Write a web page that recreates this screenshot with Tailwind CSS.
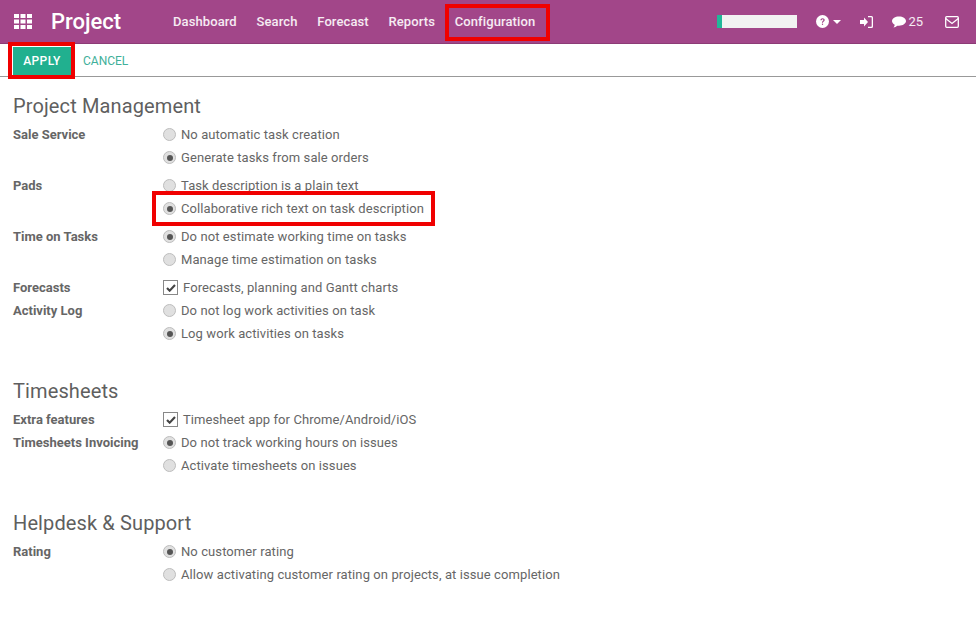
<!DOCTYPE html>
<html>
<head>
<meta charset="utf-8">
<script src="https://cdn.jsdelivr.net/npm/@tailwindcss/browser@4"></script>
</head>
<body class="bg-white">
<div class="relative w-[976px] h-[627px] overflow-hidden font-['Roboto',sans-serif] text-[13px] text-[#666666]">
  <header class="h-[44px] bg-[#a24689] border-b border-[#8c3b76] flex items-center text-white">
    <svg class="ml-[14px] w-[18px] h-[15px]" viewBox="0 0 18 15" fill="#fff">
      <rect x="0" y="0" width="5" height="4"/><rect x="6.5" y="0" width="5" height="4"/><rect x="13" y="0" width="5" height="4"/>
      <rect x="0" y="5.5" width="5" height="4"/><rect x="6.5" y="5.5" width="5" height="4"/><rect x="13" y="5.5" width="5" height="4"/>
      <rect x="0" y="11" width="5" height="4"/><rect x="6.5" y="11" width="5" height="4"/><rect x="13" y="11" width="5" height="4"/>
    </svg>
    <div class="ml-[19px] w-[70px] text-[22px] font-medium leading-none">Project</div>
    <nav class="ml-[52px] flex text-[13px] font-medium text-white/90 gap-[19.75px] tracking-[0.1px]">
      <span>Dashboard</span><span>Search</span><span>Forecast</span><span>Reports</span><span>Configuration</span>
    </nav>
    <div class="ml-auto flex items-center">
      <div class="w-[80px] h-[13px] bg-[#f2f2f2] border-l-[5px] border-[#21b799]"></div>
      <svg class="ml-[19px] w-[13px] h-[13px]" viewBox="0 0 13 13"><circle cx="6.5" cy="6.5" r="6.5" fill="#fff"/><path d="M4.4 5.2c0-1.3 1-2 2.2-2s2.1.7 2.1 1.8c0 1.500-1.700 1.500-1.700 2.700H5.900c0-1.800 1.500-1.800 1.500-2.700 0-.4-.3-.7-.8-.7s-.8.4-.9 1z" fill="#a24689"/><rect x="5.900" y="8.600" width="1.200" height="1.300" fill="#a24689"/></svg>
      <div class="ml-[4px] w-0 h-0 border-x-[4px] border-x-transparent border-t-[4px] border-t-white"></div>
      <svg class="ml-[19px] w-[13px] h-[12px]" viewBox="0 0 13 12" fill="#fff"><path d="M0 4h4V1.500L8 6l-4 4.500V8H0z"/><path d="M8 0h3.500A1.500 1.500 0 0 1 13 1.500v9a1.500 1.500 0 0 1-1.500 1.500H8v-1.300h3.200c.3 0 .5-.2.500-.5V1.800c0-.3-.2-.5-.5-.5H8z"/></svg>
      <svg class="ml-[19px] w-[14px] h-[12px]" viewBox="0 0 15 12" fill="#fff"><path d="M7.500 0C11.600 0 15 2.200 15 5s-3.400 5-7.500 5c-.6 0-1.200 0-1.800-.1C4.500 11 3 11.700 1.500 12c.7-.8 1.300-1.700 1.400-3C1.100 8 0 6.600 0 5c0-2.800 3.400-5 7.500-5z"/></svg>
      <span class="ml-[2px] text-[13px] text-white/90">25</span>
      <svg class="ml-[22px] mr-[17px] w-[14px] h-[12px]" viewBox="0 0 14 12" fill="none" stroke="#fff" stroke-width="1.300"><rect x=".7" y=".7" width="12.600" height="10.600" rx="1"/><path d="M.7 2.500 7 7.500l6.300-5"/></svg>
    </div>
  </header>

  <div class="h-[33px] border-b border-[#999999] flex items-center pl-[13px] pt-[1px]">
    <div class="w-[58px] h-[28px] bg-[#21b08f] flex items-center justify-center text-white text-[12px] font-medium tracking-[0.4px]">APPLY</div>
    <span class="ml-[12px] text-[12px] text-[#3fb09a]">CANCEL</span>
  </div>

  <main class="pl-[13px] tracking-[0.09px]">
    <h2 class="mt-[17px] mb-[5px] text-[20px] leading-[24px] text-[#5f5f5f] tracking-[0.12px]">Project Management</h2>
    <div class="mb-[5px] flex">
      <div class="w-[150px] h-[23px] leading-[23px] font-bold tracking-normal">Sale Service</div>
      <div>
        <div class="flex items-center h-[23px]"><span class="w-[13px] h-[13px] rounded-full border border-[#bdbdbd] bg-[#e0e0e0]"></span><span class="ml-[5px]">No automatic task creation</span></div>
        <div class="flex items-center h-[23px]"><span class="w-[13px] h-[13px] rounded-full border border-[#bdbdbd] bg-[#e0e0e0] flex items-center justify-center"><span class="w-[6px] h-[6px] rounded-full bg-[#555555]"></span></span><span class="ml-[5px]">Generate tasks from sale orders</span></div>
      </div>
    </div>
    <div class="mb-[5px] flex">
      <div class="w-[150px] h-[23px] leading-[23px] font-bold tracking-normal">Pads</div>
      <div>
        <div class="flex items-center h-[23px]"><span class="w-[13px] h-[13px] rounded-full border border-[#bdbdbd] bg-[#e0e0e0]"></span><span class="ml-[5px]">Task description is a plain text</span></div>
        <div class="flex items-center h-[23px]"><span class="w-[13px] h-[13px] rounded-full border border-[#bdbdbd] bg-[#e0e0e0] flex items-center justify-center"><span class="w-[6px] h-[6px] rounded-full bg-[#555555]"></span></span><span class="ml-[5px]">Collaborative rich text on task description</span></div>
      </div>
    </div>
    <div class="mb-[5px] flex">
      <div class="w-[150px] h-[23px] leading-[23px] font-bold tracking-normal">Time on Tasks</div>
      <div>
        <div class="flex items-center h-[23px]"><span class="w-[13px] h-[13px] rounded-full border border-[#bdbdbd] bg-[#e0e0e0] flex items-center justify-center"><span class="w-[6px] h-[6px] rounded-full bg-[#555555]"></span></span><span class="ml-[5px]">Do not estimate working time on tasks</span></div>
        <div class="flex items-center h-[23px]"><span class="w-[13px] h-[13px] rounded-full border border-[#bdbdbd] bg-[#e0e0e0]"></span><span class="ml-[5px]">Manage time estimation on tasks</span></div>
      </div>
    </div>
    <div class="flex">
      <div class="w-[150px] h-[23px] leading-[23px] font-bold tracking-normal">Forecasts</div>
      <div class="flex items-center h-[23px]"><span class="w-[15px] h-[15px] border border-[#888888] flex items-center justify-center"><svg class="w-[10px] h-[8px]" viewBox="0 0 11 9"><path d="M1 4.500 4 7.500 10 1.200" fill="none" stroke="#444" stroke-width="2.400"/></svg></span><span class="ml-[5px]">Forecasts, planning and Gantt charts</span></div>
    </div>
    <div class="flex">
      <div class="w-[150px] h-[23px] leading-[23px] font-bold tracking-normal">Activity Log</div>
      <div>
        <div class="flex items-center h-[23px]"><span class="w-[13px] h-[13px] rounded-full border border-[#bdbdbd] bg-[#e0e0e0]"></span><span class="ml-[5px]">Do not log work activities on task</span></div>
        <div class="flex items-center h-[23px]"><span class="w-[13px] h-[13px] rounded-full border border-[#bdbdbd] bg-[#e0e0e0] flex items-center justify-center"><span class="w-[6px] h-[6px] rounded-full bg-[#555555]"></span></span><span class="ml-[5px]">Log work activities on tasks</span></div>
      </div>
    </div>

    <h2 class="mt-[34px] mb-[5px] text-[20px] leading-[24px] text-[#5f5f5f] tracking-[0.12px]">Timesheets</h2>
    <div class="flex">
      <div class="w-[150px] h-[23px] leading-[23px] font-bold tracking-normal">Extra features</div>
      <div class="flex items-center h-[23px]"><span class="w-[15px] h-[15px] border border-[#888888] flex items-center justify-center"><svg class="w-[10px] h-[8px]" viewBox="0 0 11 9"><path d="M1 4.500 4 7.500 10 1.200" fill="none" stroke="#444" stroke-width="2.400"/></svg></span><span class="ml-[5px]">Timesheet app for Chrome/Android/iOS</span></div>
    </div>
    <div class="flex">
      <div class="w-[150px] h-[23px] leading-[23px] font-bold tracking-normal">Timesheets Invoicing</div>
      <div>
        <div class="flex items-center h-[23px]"><span class="w-[13px] h-[13px] rounded-full border border-[#bdbdbd] bg-[#e0e0e0] flex items-center justify-center"><span class="w-[6px] h-[6px] rounded-full bg-[#555555]"></span></span><span class="ml-[5px]">Do not track working hours on issues</span></div>
        <div class="flex items-center h-[23px]"><span class="w-[13px] h-[13px] rounded-full border border-[#bdbdbd] bg-[#e0e0e0]"></span><span class="ml-[5px]">Activate timesheets on issues</span></div>
      </div>
    </div>

    <h2 class="mt-[34px] mb-[5px] text-[20px] leading-[24px] text-[#5f5f5f] tracking-[0.12px]">Helpdesk &amp; Support</h2>
    <div class="flex">
      <div class="w-[150px] h-[23px] leading-[23px] font-bold tracking-normal">Rating</div>
      <div>
        <div class="flex items-center h-[23px]"><span class="w-[13px] h-[13px] rounded-full border border-[#bdbdbd] bg-[#e0e0e0] flex items-center justify-center"><span class="w-[6px] h-[6px] rounded-full bg-[#555555]"></span></span><span class="ml-[5px]">No customer rating</span></div>
        <div class="flex items-center h-[23px]"><span class="w-[13px] h-[13px] rounded-full border border-[#bdbdbd] bg-[#e0e0e0]"></span><span class="ml-[5px]">Allow activating customer rating on projects, at issue completion</span></div>
      </div>
    </div>
  </main>

  <div class="absolute left-[445px] top-[4px] w-[105px] h-[37px] border-[4px] border-[#f00000]"></div>
  <div class="absolute left-[8px] top-[42px] w-[67px] h-[37px] border-[4px] border-[#f00000]"></div>
  <div class="absolute left-[152px] top-[191px] w-[283px] h-[35px] border-[4px] border-[#f00000]"></div>
</div>
</body>
</html>
